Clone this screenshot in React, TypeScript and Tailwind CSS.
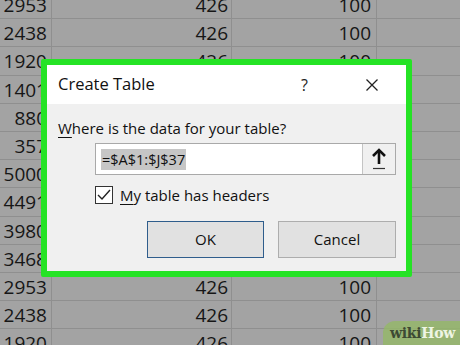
import React from "react";

const rows = ["2953","2438","1920","1401","880","357","5000","4491","3980","3468","2953","2438","1920"];

export default function App() {
  return (
    <div className="relative w-[460px] h-[345px] overflow-hidden bg-[#a3a3a3] text-[#161616]" style={{ fontFamily: '"Open Sans", "Noto Sans", sans-serif' }}>
      <div className="flex flex-col mt-[-9px]">
        {rows.map((r, i) => (
          <div key={i} className="grid grid-cols-[52px_180px_145px_1fr] h-[28.2px] border-b border-[#8f8f8f] text-[19px] leading-[28px] shrink-0">
            <div className="border-r border-[#8f8f8f] text-right pr-[4px]">{r}</div>
            <div className="border-r border-[#8f8f8f] text-right pr-[3px]">426</div>
            <div className="border-r border-[#8f8f8f] text-right pr-[5px]">100</div>
            <div />
          </div>
        ))}
      </div>

      <div className="absolute left-[41px] top-[59px] w-[371px] h-[218px] border-[6px] border-[#25e325] rounded-[2px] flex flex-col">
        <div className="h-[39px] bg-white flex items-center pl-[11px] pr-[28px] shrink-0">
          <span className="text-[16.5px] text-[#111]">Create Table</span>
          <span className="ml-auto text-[16px] text-[#222] mr-[58px]">?</span>
          <svg width="12" height="12" viewBox="0 0 12 12" className="mt-[1px]">
            <path d="M0.5 0.5 L11.5 11.5 M11.5 0.5 L0.5 11.5" stroke="#222" strokeWidth="1.3" />
          </svg>
        </div>
        <div className="flex-1 bg-[#f0f0f0] flex flex-col">
          <div className="mt-[12px] ml-[11px] text-[15px] leading-[24px] text-[#111]">
            <span className="underline underline-offset-[3px] decoration-1">W</span>here is the data for your table?
          </div>
          <div className="mt-[3px] ml-[48px] w-[301px] h-[32px] bg-white border border-[#a9a9a9] flex">
            <div className="flex-1 flex items-center pl-[5px]">
              <span className="bg-[#c6c6c6] text-[14.5px] leading-[21px] px-[1px] text-[#111]">=$A$1:$J$37</span>
            </div>
            <div className="w-[33px] bg-[#f0f0f0] border-l border-[#c4c4c4] flex items-center justify-center">
              <svg width="16" height="22" viewBox="0 0 16 22">
                <path d="M8 2 L8 16" stroke="#111" strokeWidth="2.6" />
                <path d="M2 8 L8 2 L14 8" stroke="#111" strokeWidth="2.6" fill="none" />
                <path d="M2 20.5 L14 20.5" stroke="#333" strokeWidth="1.2" />
              </svg>
            </div>
          </div>
          <div className="mt-[11px] ml-[48px] flex items-center h-[18px]">
            <div className="w-[18px] h-[18px] bg-white border border-[#333] flex items-center justify-center">
              <svg width="14" height="12" viewBox="0 0 14 12">
                <path d="M1 6 L5 10 L13 1" stroke="#222" strokeWidth="1.4" fill="none" />
              </svg>
            </div>
            <span className="ml-[7px] text-[15px] text-[#111]">
              <span className="underline underline-offset-[3px] decoration-1">M</span>y table has headers
            </span>
          </div>
          <div className="mt-[17px] ml-[100px] flex gap-[14px]">
            <div className="w-[117px] h-[37px] bg-[#e1e1e1] border border-[#2f5d8c] flex items-center justify-center text-[15px] text-[#111]">OK</div>
            <div className="w-[118px] h-[37px] bg-[#e1e1e1] border border-[#adadad] flex items-center justify-center text-[15px] text-[#111]">Cancel</div>
          </div>
        </div>
      </div>

      <div className="absolute right-0 bottom-0 w-[77px] h-[24px] bg-[#93b866]/80 rounded-tl-[12px] flex items-center pl-[7px]">
        <span className="text-[14px] font-bold tracking-[-0.3px]" style={{ fontFamily: '"DejaVu Serif", serif' }}>
          <span className="text-[#3d4a33]">wiki</span><span className="text-[#eef5e4]">How</span>
        </span>
      </div>
    </div>
  );
}
